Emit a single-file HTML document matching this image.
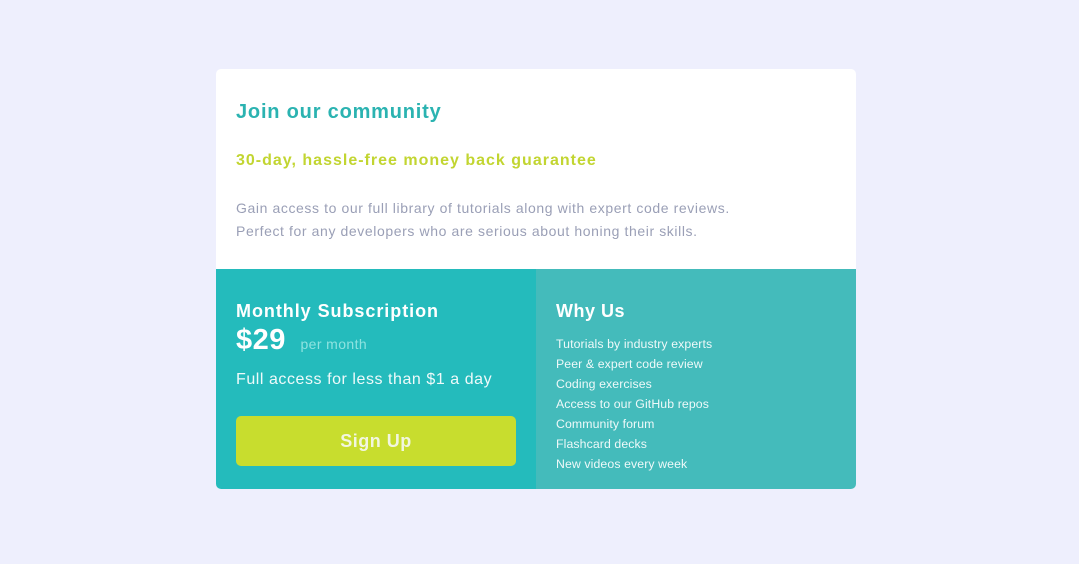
<!DOCTYPE html>
<html><head><style>
*{margin:0;padding:0;box-sizing:border-box}
body{width:1079px;height:564px;background:#eeeffd;font-family:"Liberation Sans",sans-serif;position:relative;overflow:hidden}
.card{position:absolute;left:216px;top:69px;width:640px;height:420px;border-radius:5px;overflow:hidden;background:#fff}
.top{height:200px;position:relative}
.t{position:absolute;left:20px;white-space:nowrap}
.bot{position:absolute;top:200px;left:0;width:640px;height:220px;display:flex}
.l{width:320px;background:#24bbbc;position:relative;color:#fff}
.r{width:320px;background:#44bbbb;position:relative;color:#fff}
.btn{position:absolute;left:20px;top:147px;width:280px;height:50px;background:#c8dd2e;border-radius:5px;color:#f2f6e0;font-weight:bold;font-size:18px;text-align:center;line-height:50px;letter-spacing:.5px}
ul{list-style:none;position:absolute;left:20px;top:65px;font-size:12.3px;line-height:20px;color:#eef9f9;letter-spacing:.1px}
</style></head><body>
<div class="card">
<div class="top">
<div class="t" style="top:32px;font-size:20px;font-weight:bold;color:#2bb3b1;letter-spacing:.8px">Join our community</div>
<div class="t" style="top:83px;font-size:16px;font-weight:bold;color:#c2d531;letter-spacing:1px">30-day, hassle-free money back guarantee</div>
<div class="t" style="top:128px;font-size:14px;line-height:23px;color:#9a9fb6;letter-spacing:.6px">Gain access to our full library of tutorials along with expert code reviews.<br>Perfect for any developers who are serious about honing their skills.</div>
</div>
<div class="bot">
<div class="l">
<div class="t" style="top:32px;font-size:18px;font-weight:bold;letter-spacing:.95px">Monthly Subscription</div>
<div class="t" style="top:55px;font-size:29px;font-weight:bold;letter-spacing:.5px">$29 <span style="font-size:14px;font-weight:normal;color:#8ee3e0;margin-left:6px;letter-spacing:.4px">per month</span></div>
<div class="t" style="top:102px;font-size:16px;color:#eefafa;letter-spacing:.55px">Full access for less than $1 a day</div>
<div class="btn">Sign Up</div>
</div>
<div class="r">
<div class="t" style="top:32px;font-size:18px;font-weight:bold;letter-spacing:.5px">Why Us</div>
<ul><li>Tutorials by industry experts</li><li>Peer &amp; expert code review</li><li>Coding exercises</li><li>Access to our GitHub repos</li><li>Community forum</li><li>Flashcard decks</li><li>New videos every week</li></ul>
</div>
</div>
</div>
</body></html>
